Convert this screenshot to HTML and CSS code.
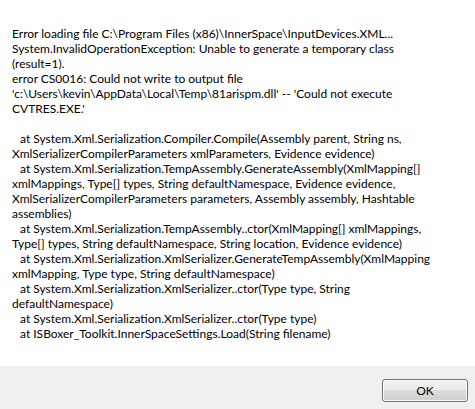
FILE: index.html
```
<!DOCTYPE html>
<html>
<head>
<meta charset="utf-8">
<link rel="stylesheet" href="styles.css">
</head>
<body>
<div class="dialog">
  <div class="content">
    <div class="message"><div class="line">Error loading file C:\Program Files (x86)\InnerSpace\InputDevices.XML...</div><div class="line">System.InvalidOperationException: Unable to generate a temporary class</div><div class="line">(result=1).</div><div class="line">error CS0016: Could not write to output file</div><div class="line">'c:\Users\kevin\AppData\Local\Temp\81arispm.dll' -- 'Could not execute</div><div class="line">CVTRES.EXE.'</div><div class="blank"></div><div class="line indent">at System.Xml.Serialization.Compiler.Compile(Assembly parent, String ns,</div><div class="line">XmlSerializerCompilerParameters xmlParameters, Evidence evidence)</div><div class="line indent">at System.Xml.Serialization.TempAssembly.GenerateAssembly(XmlMapping[]</div><div class="line">xmlMappings, Type[] types, String defaultNamespace, Evidence evidence,</div><div class="line">XmlSerializerCompilerParameters parameters, Assembly assembly, Hashtable</div><div class="line">assemblies)</div><div class="line indent">at System.Xml.Serialization.TempAssembly..ctor(XmlMapping[] xmlMappings,</div><div class="line">Type[] types, String defaultNamespace, String location, Evidence evidence)</div><div class="line indent">at System.Xml.Serialization.XmlSerializer.GenerateTempAssembly(XmlMapping</div><div class="line">xmlMapping, Type type, String defaultNamespace)</div><div class="line indent">at System.Xml.Serialization.XmlSerializer..ctor(Type type, String</div><div class="line">defaultNamespace)</div><div class="line indent">at System.Xml.Serialization.XmlSerializer..ctor(Type type)</div><div class="line indent">at ISBoxer_Toolkit.InnerSpaceSettings.Load(String filename)</div></div>
  </div>
  <div class="footer">
    <button class="ok-button">OK</button>
  </div>
</div>
</body>
</html>
```
FILE: styles.css
```
html, body {
  margin: 0;
  padding: 0;
  width: 475px;
  height: 409px;
  overflow: hidden;
  background: #ffffff;
}

.dialog {
  display: flex;
  flex-direction: column;
  width: 475px;
  height: 409px;
  font-family: Lato, "Liberation Sans", sans-serif;
  font-size: 12px;
  color: #000000;
}

.content {
  flex: 1;
  background: #ffffff;
  padding: 26px 12px 0 12px;
}

.message {
  display: flex;
  flex-direction: column;
}

.line {
  line-height: 15px;
  height: 15px;
  white-space: pre;
}

.blank {
  height: 15px;
}

.indent {
  padding-left: 8px;
}

.footer {
  height: 43px;
  background: #f0f0f0;
  display: flex;
  justify-content: flex-end;
  align-items: flex-start;
  padding: 13px 7px 0 0;
  box-sizing: border-box;
}

.ok-button {
  width: 86px;
  height: 23px;
  box-sizing: border-box;
  border: 1px solid #707070;
  border-radius: 3px;
  background: linear-gradient(to bottom, #f2f2f2 0%, #ebebeb 50%, #dddddd 50%, #cfcfcf 100%);
  box-shadow: inset 0 0 0 1px #fcfcfc;
  font-family: Lato, "Liberation Sans", sans-serif;
  font-size: 12px;
  color: #000000;
  padding: 0;
  margin: 0;
}
```
